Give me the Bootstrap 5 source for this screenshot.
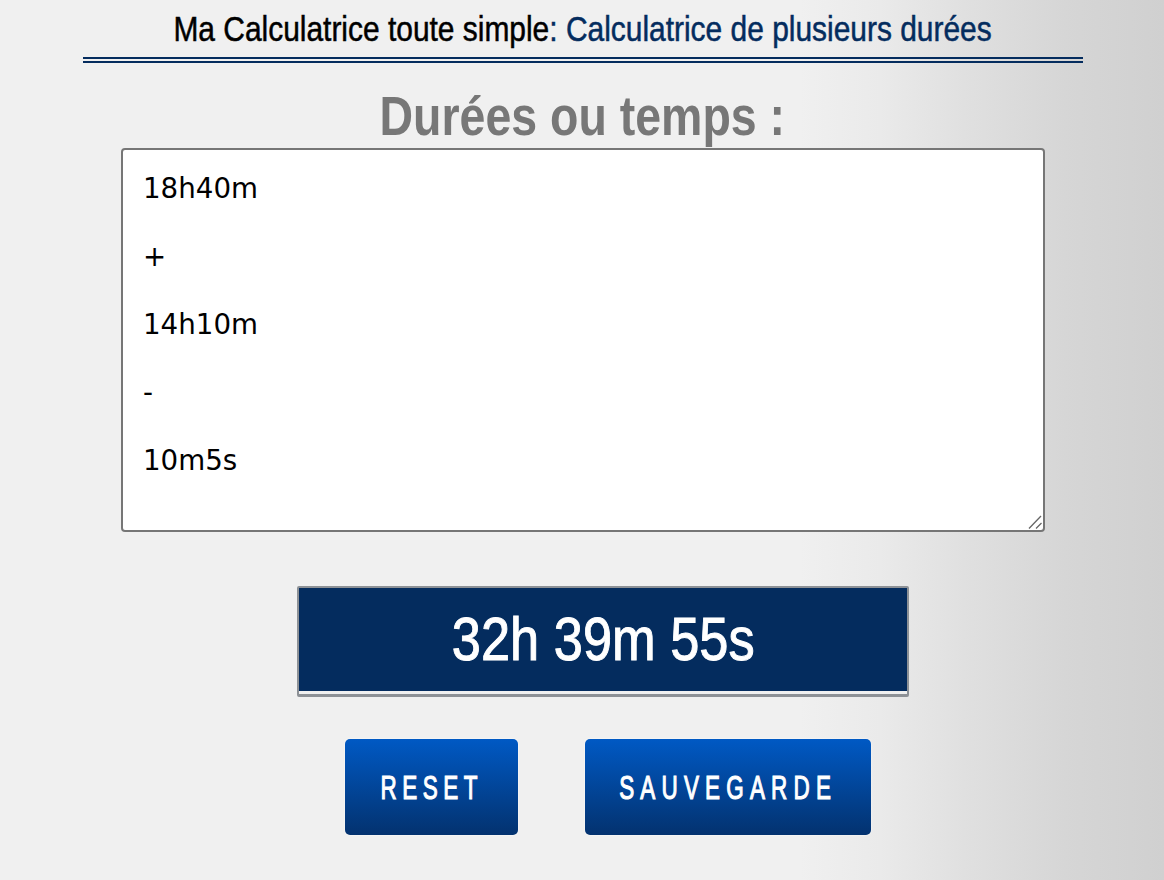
<!DOCTYPE html>
<html lang="fr">
<head>
<meta charset="utf-8">
<title>Calculatrice de plusieurs durées</title>
<link rel="stylesheet" href="https://cdn.jsdelivr.net/npm/bootstrap@5.3.0/dist/css/bootstrap.min.css">
<style>
html,body{height:100%}
body{background:linear-gradient(to right,#f0f0f0 0,#f0f0f0 68.7%,#eaeaea 75.6%,#e0e0e0 82.8%,#d6d6d6 91.4%,#d0d0d0 100%);overflow:hidden;font-family:"Liberation Sans",sans-serif}
.squeeze{display:inline-block;white-space:nowrap;transform-origin:center}
.head-wrap{width:1000px;margin-left:83px;padding-top:10px}
.top-title{font-size:35px;line-height:38px;color:#000;margin:0;text-align:center;font-weight:400;height:47px;-webkit-text-stroke:.5px currentColor}
.top-title span span{color:#042c5e}
.top-title .squeeze{transform:scaleX(.855)}
.dbl-rule{height:6px;border-top:2px solid #042c5e;border-bottom:2px solid #042c5e}
.sub-title{font-size:56px;line-height:60px;color:#777;text-align:center;margin:23px 0 0 0;padding-right:0;font-weight:700;height:62px}
.sub-title .squeeze{transform:scaleX(.83)}
.txt-wrap{width:924px;margin-left:121px}
.dur-area{display:block;width:100%;height:384px;border:2px solid #767676;border-radius:4px;background:#fff;color:#000;font-family:"DejaVu Sans",Verdana,sans-serif;font-size:27.7px;line-height:34px;padding:22px 20px;outline:0;resize:none}
.grip{right:3px;bottom:3px;pointer-events:none}
.result-box{width:612px;height:111px;margin:54px 0 0 297px;background:#042c5e;color:#fff;border:2px solid #8d9196;border-bottom-width:3px;border-radius:2px;box-shadow:inset 0 -3px 0 #f0f0f0;font-size:62px;font-weight:400;line-height:102px;text-align:center;-webkit-text-stroke:1px #fff}
.result-box .squeeze{transform:scaleX(.845)}
.btn-row{margin:42px 0 0 345px;gap:67px}
.act-btn{height:96px;border:0;border-radius:5px;color:#fff;background:linear-gradient(#0059c4,#03326f);font-size:34px;font-weight:400;box-shadow:0 0 2px #fff;padding:0;-webkit-text-stroke:1.2px #fff}
.act-btn:hover,.act-btn:active{color:#fff;background:linear-gradient(#0059c4,#03326f)}
.b-reset{width:173px;letter-spacing:8.4px}
.b-save{width:286px;letter-spacing:9.4px}
.act-btn .squeeze{transform:scaleX(.66)}
</style>
</head>
<body>
<div class="head-wrap">
<h1 class="top-title"><span class="squeeze">Ma Calculatrice toute simple<span>: Calculatrice de plusieurs durées</span></span></h1>
<div class="dbl-rule"></div>
</div>
<h2 class="sub-title"><span class="squeeze">Durées ou temps :</span></h2>
<div class="txt-wrap position-relative">
<textarea class="dur-area" spellcheck="false">18h40m

+

14h10m

-

10m5s</textarea>
<svg class="grip position-absolute" width="14" height="14" viewBox="0 0 14 14" aria-hidden="true"><path d="M1 13.5 13 1M8 13.5 13.5 8" stroke="#666" stroke-width="1.3" fill="none"/></svg>
</div>
<div class="result-box"><span class="squeeze">32h 39m 55s</span></div>
<div class="d-flex btn-row">
<button type="button" class="btn act-btn b-reset d-flex align-items-center justify-content-center"><span class="squeeze">RESET</span></button>
<button type="button" class="btn act-btn b-save d-flex align-items-center justify-content-center"><span class="squeeze">SAUVEGARDE</span></button>
</div>
<script src="https://cdn.jsdelivr.net/npm/bootstrap@5.3.0/dist/js/bootstrap.bundle.min.js"></script>
</body>
</html>
